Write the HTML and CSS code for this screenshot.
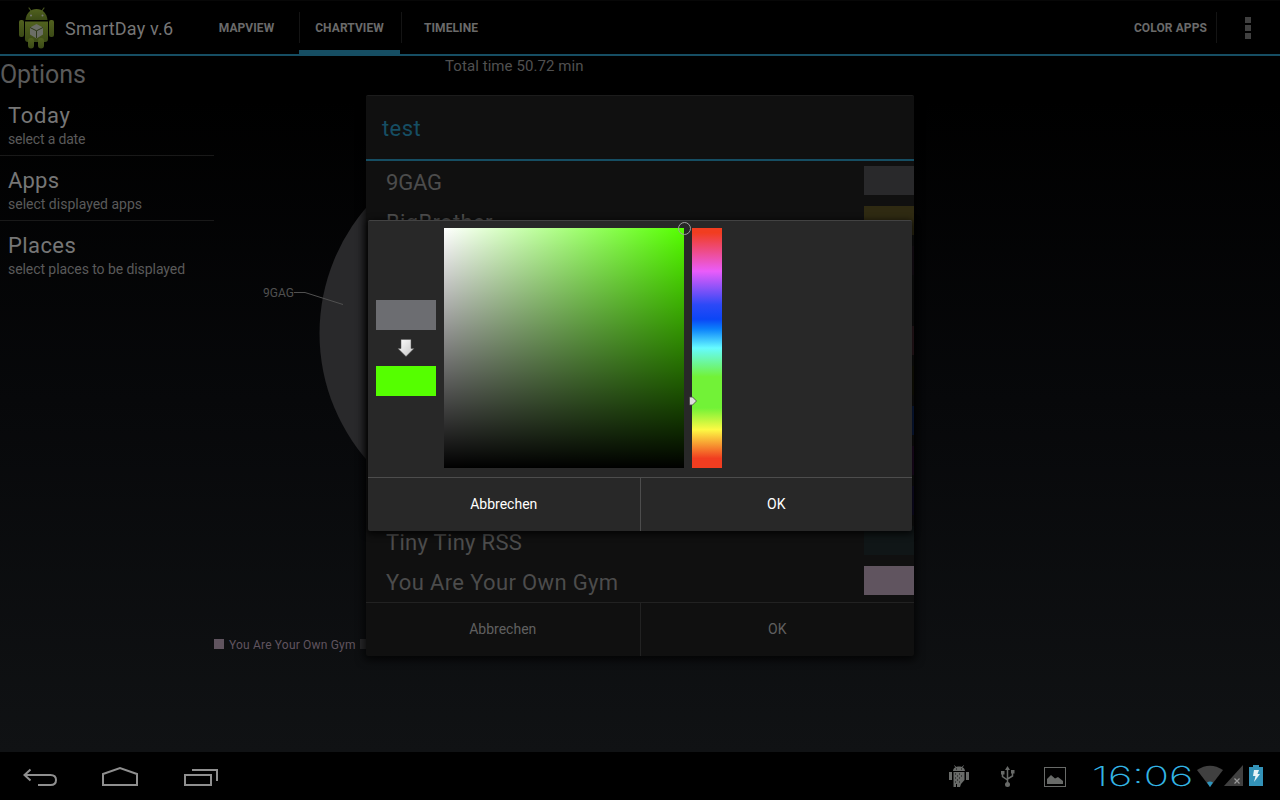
FILE: index.html
```html
<!DOCTYPE html>
<html lang="de">
<head>
<meta charset="utf-8">
<title>SmartDay</title>
<link rel="stylesheet" href="styles.css">
</head>
<body>
<div class="screen">
  <header class="actionbar">
    <svg class="logo" width="40" height="48" viewBox="0 0 40 48">
      <defs>
        <linearGradient id="green" x1="0" x2="0" y1="0" y2="1"><stop offset="0" stop-color="#51611f"/><stop offset="1" stop-color="#3b4a16"/></linearGradient>
      </defs>
      <path d="M12 7l2.500 3.500M27 7l-2.500 3.500" stroke="#475520" stroke-width="1.200" stroke-linecap="round"/>
      <g fill="url(#green)">
        <path d="M8.500 19C9 12.500 13.500 8 19.500 8S30 12.500 30.500 19z"/>
        <path d="M8 20.500h23V38a3 3 0 0 1-3 3H11a3 3 0 0 1-3-3z"/>
        <rect x="2" y="19" width="5" height="17" rx="2"/>
        <rect x="32" y="19" width="5" height="17" rx="2"/>
        <rect x="11" y="37" width="6" height="10.500" rx="3"/>
        <rect x="21" y="37" width="6" height="10.500" rx="3"/>
      </g>
      <circle cx="14" cy="14.500" r="1" fill="#777"/><circle cx="25.500" cy="14.500" r="1" fill="#777"/>
      <path d="M13 26.500l6.500-3.500 6.500 3.500v7l-6.500 4-6.500-4z" fill="#6b6e66"/>
      <path d="M13 26.500l6.500 3.300 6.500-3.300M19.500 29.800V37" fill="none" stroke="#2d3818" stroke-width="1"/>
    </svg>
    <h1 class="app-name">SmartDay v.6</h1>
    <nav class="tabs">
      <div class="tab tab-first">MAPVIEW</div>
      <div class="tab tab-active">CHARTVIEW</div>
      <div class="tab tab-last">TIMELINE</div>
    </nav>
    <div class="action">COLOR APPS</div>
    <div class="overflow"><i></i><i></i><i></i></div>
  </header>

  <main class="content">
    <aside class="options">
      <h2 class="options-title">Options</h2>
      <div class="option"><b class="o1">Today</b><span class="s1">select a date</span></div>
      <div class="option"><b class="o2">Apps</b><span class="s2">select displayed apps</span></div>
      <div class="option"><b class="o3">Places</b><span class="s3">select places to be displayed</span></div>
    </aside>
    <svg class="chart" width="1066" height="696" viewBox="214 56 1066 696">
      <text x="445" y="71" font-size="15" textLength="138.500" fill="#505050">Total time 50.72 min</text>
      <circle cx="512.500" cy="333.500" r="193" fill="#29292b"/>
      <path d="M294 292.500h11l38 12" fill="none" stroke="#505050"/>
      <text x="263" y="297" font-size="12" textLength="31" fill="#505050">9GAG</text>
      <rect x="214" y="639" width="10" height="10" fill="#60545f"/>
      <text x="229" y="649" font-size="12" textLength="126.500" fill="#60545f">You Are Your Own Gym</text>
      <rect x="360" y="639" width="10" height="10" fill="#29292b"/>
    </svg>
  </main>

  <footer class="systembar">
    <svg width="240" height="48" viewBox="0 0 240 48" fill="none" stroke="#8f8f8f" stroke-width="2">
      <path d="M30.500 17.500L24.500 23l6 5.500M25 23h25.500q5.500 0 5.500 5t-5.500 5H38"/>
      <path d="M103 33V22l17-6 17 6v11z"/>
      <path d="M185 23h26v10h-26zM192 18h25v11"/>
    </svg>
    <div class="status">
      <svg width="120" height="48" viewBox="946 0 120 48">
        <g fill="#686a68">
          <path d="M953 19c.5-3.500 3-4.500 6-4.500s5.500 1 6 4.500zM949 20h3v8h-3zM966 20h3v8h-3z"/>
          <path d="M953.500 20h11v8l-3.500 4-1 3h-3v-3h-1v3h-2.500z"/>
          <path d="M954.500 13.500l1.500 2M963.500 13.500l-1.500 2" stroke="#686a68"/>
        </g>
        <path d="M955 22h1m3 0h1m-3 2h1m3 0h1m-7 2h1m3 0h1m-3 2h1m-3 2h1m3 0h1M956 17h1m4 0h1" stroke="#111" fill="none"/>
        <g fill="none" stroke="#686a68" stroke-width="1.500">
          <path d="M1007.500 16v18M1002.500 21v3.500l5 3.500M1012.500 20v4l-5 3"/>
        </g>
        <path d="M1007.500 14l2.500 4h-5zM1001 19h3.500v3.500H1001zM1011 18h3.500v3.500H1011z" fill="#686a68"/>
        <circle cx="1007.500" cy="32.500" r="2.500" fill="#686a68"/>
        <rect x="1044.500" y="15.500" width="21" height="19" fill="none" stroke="#686a68"/>
        <path d="M1047 32v-5l4-4 4 3.500 3-1.500 5 4v3z" fill="#686a68"/>
      </svg>
      <div class="clock"><span>16:06</span></div>
      <svg width="70" height="48" viewBox="1195 0 70 48">
        <path d="M1197 18q13-8.500 26 0l-13 17z" fill="#404040"/>
        <path d="M1207 30.500q3-2 6 0l-3 4.500z" fill="#2d94bd"/>
        <path d="M1224 34l19-21v21z" fill="#404040"/>
        <path d="M1234.500 26.500l5 5m0-5l-5 5" stroke="#999" stroke-width="1.200"/>
        <path d="M1249 15h4v-2h6v2h4v19h-14z" fill="#3392b8"/>
        <path d="M1254 18h5l-1.500 4h2.500l-6 8 1.500-6h-2.500z" fill="#e8f3f7"/>
      </svg>
    </div>
  </footer>

  <section class="dialog apps-dialog">
    <h3 class="dialog-title">test</h3>
    <ul class="applist">
      <li><span class="a1">9GAG</span><i class="c1"></i></li>
      <li><span class="a2">BigBrother</span><i class="c2"></i></li>
      <li><i class="c3"></i></li>
      <li></li>
      <li><i class="c5"></i></li>
      <li><i class="c6"></i></li>
      <li><i class="c7"></i></li>
      <li><i class="c8"></i></li>
      <li><i class="c9"></i></li>
      <li><span class="a10">Tiny Tiny RSS</span><i class="c10"></i></li>
      <li><span class="a11">You Are Your Own Gym</span><i class="c11"></i></li>
    </ul>
    <div class="buttons"><div>Abbrechen</div><div>OK</div></div>
  </section>

  <section class="dialog picker-dialog">
    <div class="picker">
      <div class="preview">
        <div class="old-color"></div>
        <svg width="18" height="20" viewBox="0 0 18 20">
          <defs><linearGradient id="arr" x1="0" x2="1" y1="0" y2="1"><stop offset="0" stop-color="#fff"/><stop offset="1" stop-color="#c4c4c4"/></linearGradient></defs>
          <path d="M4 1.500h10v9h3L9 18.500 1 10.500h3z" fill="url(#arr)" stroke="#555" stroke-width=".5"/>
        </svg>
        <div class="new-color"></div>
      </div>
      <div class="satval"><span class="target"></span></div>
      <div class="hue">
        <svg class="cursor" width="8" height="10" viewBox="0 0 8 10"><path d="M.5 1h3l4 4-4 4h-3z" fill="#ddd" stroke="#444" stroke-width=".8"/></svg>
      </div>
    </div>
    <div class="buttons"><div>Abbrechen</div><div>OK</div></div>
  </section>
</div>
</body>
</html>
```
FILE: styles.css
```css
* { box-sizing: border-box; margin: 0; padding: 0; }
body { background: #000; font-family: Roboto, "Liberation Sans", sans-serif; }
svg { display: block; flex: none; }
svg text { font-family: Roboto, "Liberation Sans", sans-serif; }

.screen {
  position: relative;
  width: 1280px;
  height: 800px;
  overflow: hidden;
  display: flex;
  flex-direction: column;
  background: linear-gradient(#000 0, #000 100px, #07080a 400px, #101214 752px);
}

.actionbar {
  height: 56px;
  flex: none;
  display: flex;
  background: #000;
  border-top: 1px solid #070707;
  border-bottom: 2px solid #164e63;
  color: #6a6a6a;
}
.logo { margin: 0 0 0 17px; }
.app-name {
  width: 138px;
  padding-left: 8px;
  font-size: 18px;
  font-weight: 400;
  line-height: 55px;
  letter-spacing: .22px;
  white-space: nowrap;
  color: #767676;
}
.tabs { display: flex; flex: 1; }
.tab {
  height: 53px;
  font-size: 12px;
  font-weight: 700;
  line-height: 54px;
  letter-spacing: .08px;
  text-align: center;
}
.tab-first { width: 104px; padding-right: 1px; }
.tab-active {
  width: 101px;
  background: linear-gradient(#141414, #141414) 0 11px / 1px 31px no-repeat;
  border-bottom: 4px solid #164e63;
}
.tab-last {
  width: 102px;
  margin-left: 1px;
  padding-right: 2px;
  background: linear-gradient(#141414, #141414) 0 11px / 1px 31px no-repeat;
}
.action {
  width: 84px;
  padding-right: 10px;
  font-size: 12px;
  font-weight: 700;
  line-height: 54px;
  letter-spacing: .1px;
  text-align: right;
  white-space: nowrap;
  background: linear-gradient(#141414, #141414) 83px 11px / 1px 31px no-repeat;
}
.overflow {
  width: 63px;
  padding: 16px 0 0 28px;
  display: flex;
  flex-direction: column;
  gap: 2px;
}
.overflow i { width: 6px; height: 6px; background: #404040; }

.content { flex: 1; display: flex; }
.options { width: 214px; flex: none; }
.options-title {
  height: 35px;
  font-size: 25px;
  font-weight: 400;
  line-height: 37px;
  letter-spacing: -.1px;
  color: #5a5a5a;
}
.option {
  height: 65px;
  padding: 12px 8px 0;
  display: flex;
  flex-direction: column;
  border-bottom: 1px solid #191919;
  white-space: nowrap;
}
.option:last-child { border-bottom: 0; }
.option b { font-size: 22px; font-weight: 400; line-height: 26px; color: #767676; letter-spacing: .65px; }
.option .o2 { letter-spacing: .2px; }
.option .o3 { letter-spacing: .4px; }
.option span { font-size: 14px; line-height: 20px; color: #5a5a5a; }
.option .s1 { letter-spacing: -.17px; }
.option .s3 { letter-spacing: -.07px; }

.systembar {
  height: 48px;
  flex: none;
  display: flex;
  justify-content: space-between;
  background: #000;
}
.status { display: flex; width: 334px; }
.clock { width: 129px; padding-left: 26px; }
.clock span {
  display: block;
  width: 66px;
  font-family: Inter, "Liberation Sans", sans-serif;
  font-size: 27.5px;
  font-weight: 200;
  line-height: 48px;
  color: #33b5e5;
  transform: scaleX(1.52);
  transform-origin: 0 0;
}

.dialog {
  position: absolute;
  border-radius: 2px;
  display: flex;
  flex-direction: column;
}
.apps-dialog {
  left: 366px;
  top: 95px;
  width: 548px;
  height: 561px;
  background: #101010;
  border-top: 1px solid #1c1c1c;
  box-shadow: 0 2px 8px 2px rgba(0, 0, 0, .75);
}
.dialog-title {
  height: 65px;
  padding-left: 16px;
  font-size: 22px;
  font-weight: 400;
  line-height: 66px;
  letter-spacing: .4px;
  color: #164e63;
  border-bottom: 2px solid #164e63;
}
.applist { list-style: none; height: 441px; flex: none; }
.applist li {
  height: 40px;
  padding: 0 0 0 20px;
  display: flex;
  align-items: flex-start;
  font-size: 22px;
  line-height: 43px;
  letter-spacing: .35px;
  color: #4c4c4c;
  white-space: nowrap;
}
.applist .a1 { letter-spacing: -.2px; }
.applist .a10 { letter-spacing: .3px; }
.applist i { width: 50px; height: 29px; margin: 5px 0 0 auto; }
.c1 { background: #29292b; }
.c2 { background: #2f2a12; }
.c3 { background: #180f18; }
.c5 { background: #2d1a20; }
.c6 { background: #131307; }
.c7 { background: #0a1c44; }
.c8 { background: #200a24; }
.c9 { background: #100c28; }
.c10 { background: #101617; }
.c11 { background: #60545f; }

.buttons { flex: 1; display: flex; border-top: 1px solid #222; }
.buttons div {
  flex: 1;
  font-size: 14px;
  line-height: 53px;
  text-align: center;
  color: #606060;
}
.buttons div + div { border-left: 1px solid #222; }

.picker-dialog {
  left: 368px;
  top: 220px;
  width: 544px;
  height: 311px;
  background: #282828;
  border-top: 1px solid #424242;
  box-shadow: 0 2px 7px 1px rgba(0, 0, 0, .8);
}
.picker { height: 256px; padding: 7px 8px; display: flex; gap: 8px; }
.picker-dialog .buttons, .picker-dialog .buttons div { border-color: #4d4d4d; }
.picker-dialog .buttons div { color: #fff; }
.preview {
  width: 60px;
  height: 240px;
  display: flex;
  flex-direction: column;
  align-items: center;
  justify-content: center;
  gap: 8px;
}
.old-color, .new-color { width: 60px; height: 30px; }
.old-color { background: #6c6d71; }
.new-color { background: #55ff00; }
.satval {
  position: relative;
  width: 240px;
  height: 240px;
  background: linear-gradient(transparent, #000), linear-gradient(to right, #fff, #55ff00);
}
.target {
  position: absolute;
  right: -7px;
  top: -6px;
  width: 13px;
  height: 13px;
  border: 1px solid #a0a0a0;
  border-radius: 50%;
}
.hue {
  position: relative;
  width: 30px;
  height: 240px;
  background: linear-gradient(#f13d20 0, #f13d20 2%, #ea5cfa 18%, #2c49f7 32%, #0b46f6 38%, #0b80fb 42%, #66fbff 50%, #72f237 62%, #72f237 75%, #fdfa44 84%, #f13d20 96%);
}
.cursor { position: absolute; left: -3px; top: 168px; }
```
